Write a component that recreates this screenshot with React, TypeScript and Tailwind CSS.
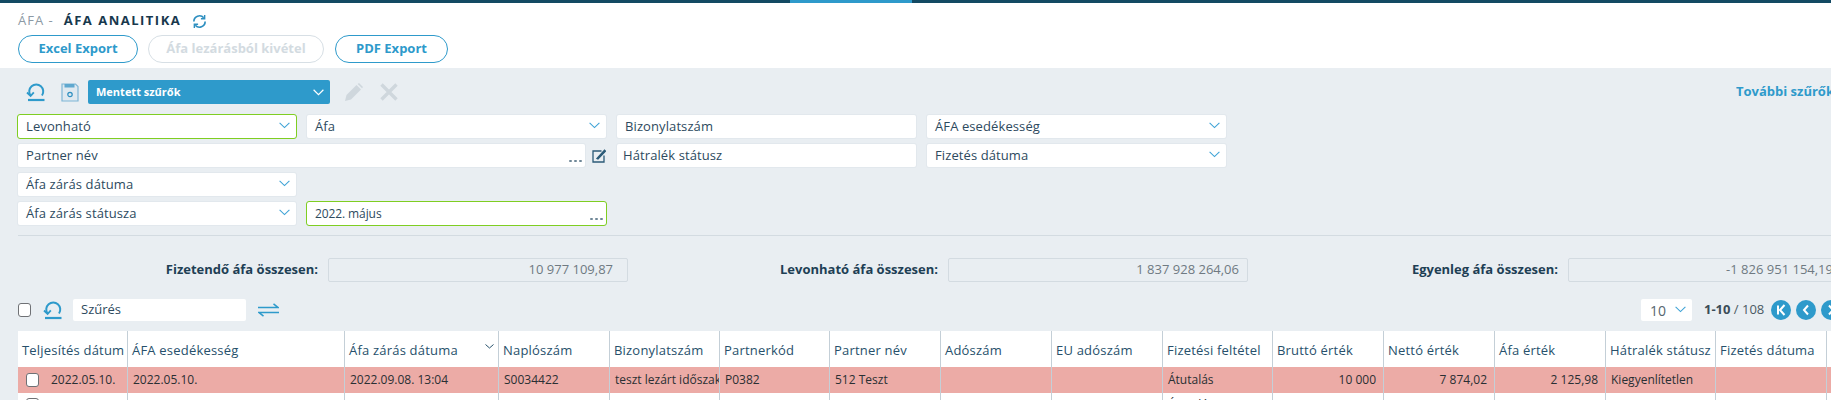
import React from "react";

const font = { fontFamily: '"Open Sans", "Noto Sans", sans-serif' };

function Chevron({ className = "" }: { className?: string }) {
  return (
    <svg width="11" height="7" viewBox="0 0 11 7" className={className} fill="none" stroke="#3fa3d6" strokeWidth="1.1">
      <path d="M0.6 0.8 L5.5 5.6 L10.4 0.8" />
    </svg>
  );
}

function Undo({ size = 20 }: { size?: number }) {
  return (
    <svg width={size} height={size} viewBox="0 0 20 20" fill="none" stroke="#2e9acb" strokeWidth="2">
      <path d="M4.5 13.5 A7 7 0 1 1 16 13.5" />
      <path d="M1 10.5 L4.6 14 L7.8 10.3" strokeWidth="1.8" />
      <path d="M2 18 H18.5" strokeWidth="2.2" />
    </svg>
  );
}

function Save() {
  return (
    <svg width="18" height="19" viewBox="0 0 18 19" fill="none" stroke="#2e8fc0" strokeWidth="1.2">
      <path d="M1 1 H14.5 L17 3.5 V18 H1 Z" fill="#dfe9f0" stroke="#7fb6d6" />
      <rect x="3.5" y="1" width="10" height="3.5" fill="#5fa8cf" stroke="none" />
      <circle cx="9" cy="11.5" r="2.2" />
    </svg>
  );
}

function Field({ children, green = false, chevron = false, dots = false, tone = "" }: { children: React.ReactNode; green?: boolean; chevron?: boolean; dots?: boolean; tone?: string }) {
  return (
    <div
      className={`relative flex h-[23px] items-center rounded-[2px] bg-white text-[13px] text-[#2d4a5e] ${tone || "pl-2"} ${
        green ? "outline outline-1 outline-[#7fce22]" : "shadow-[0_0_0_1px_#e2e8ed]"
      }`}
    >
      <span className="tracking-[0.1px]">{children}</span>
      {chevron && (
        <span className="absolute right-[6px] top-[7px]">
          <Chevron />
        </span>
      )}
      {dots && <Dots />}
    </div>
  );
}

function Dots() {
  return (
    <span className="absolute bottom-[5px] right-[3px] flex gap-[2px]">
      <i className="block h-[2px] w-[3px] rounded-full bg-[#6f8797]" />
      <i className="block h-[2px] w-[3px] rounded-full bg-[#6f8797]" />
      <i className="block h-[2px] w-[3px] rounded-full bg-[#6f8797]" />
    </span>
  );
}

function Sum({ label, value, pad }: { label: string; value: string; pad: string }) {
  return (
    <div className="flex w-[620px] shrink-0 items-center justify-end gap-[10px]">
      <span className="text-[13px] font-bold text-[#1e3f55]">{label}</span>
      <div className={`flex h-[24px] w-[300px] items-center justify-end rounded-[2px] border border-[#d3dbe1] bg-[#e9eef2] text-[13px] text-[#6f7a82] ${pad}`}>
        {value}
      </div>
    </div>
  );
}

function PageBtn({ d }: { d: string }) {
  return (
    <span className="flex h-5 w-5 shrink-0 items-center justify-center rounded-full bg-[#2e9acb]">
      <svg width="12" height="12" viewBox="0 0 12 12" fill="none" stroke="#fff" strokeWidth="2">
        <path d={d} />
      </svg>
    </span>
  );
}

const columns: { title: string; w: number; cell?: string; right?: boolean }[] = [
  { title: "Teljesítés dátum", w: 110 },
  { title: "ÁFA esedékesség", w: 217, cell: "2022.05.10." },
  { title: "Áfa zárás dátuma", w: 154, cell: "2022.09.08. 13:04" },
  { title: "Naplószám", w: 111, cell: "S0034422" },
  { title: "Bizonylatszám", w: 110, cell: "teszt lezárt időszak" },
  { title: "Partnerkód", w: 110, cell: "P0382" },
  { title: "Partner név", w: 111, cell: "512 Teszt" },
  { title: "Adószám", w: 111 },
  { title: "EU adószám", w: 111 },
  { title: "Fizetési feltétel", w: 110, cell: "Átutalás" },
  { title: "Bruttó érték", w: 111, cell: "10 000", right: true },
  { title: "Nettó érték", w: 111, cell: "7 874,02", right: true },
  { title: "Áfa érték", w: 111, cell: "2 125,98", right: true },
  { title: "Hátralék státusz", w: 110, cell: "Kiegyenlítetlen" },
  { title: "Fizetés dátuma", w: 111 },
  { title: "", w: 60 },
];

export default function App() {
  return (
    <div className="h-[400px] w-[1831px] overflow-hidden bg-[#e9eef2]" style={font}>
      <div className="flex h-[3px]">
        <div className="w-[790px] bg-[#134a63]" />
        <div className="w-[122px] bg-[#2e9acb]" />
        <div className="flex-1 bg-[#134a63]" />
      </div>

      <header className="h-[65px] bg-white pl-[18px]">
        <div className="flex h-[32px] items-center pt-[4px]">
          <span className="text-[13px] tracking-[1px] text-[#8c99a4]">ÁFA -</span>
          <span className="ml-[10px] text-[13px] font-bold tracking-[1.5px] text-[#17384d]">ÁFA ANALITIKA</span>
          <svg className="ml-[11px]" width="15" height="15" viewBox="0 0 16 16" fill="none" stroke="#2e8fc0" strokeWidth="1.8">
            <path d="M2 8 A6 6 0 0 1 12.5 4" />
            <path d="M14 8 A6 6 0 0 1 3.5 12" />
            <path d="M13.5 1 V5 H9.5" strokeWidth="1.5" />
            <path d="M2.5 15 V11 H6.5" strokeWidth="1.5" />
          </svg>
        </div>
        <div className="flex">
          <button className="h-[28px] w-[120px] rounded-full border border-[#2e9acb] text-[13px] font-bold text-[#2e9acb]">Excel Export</button>
          <button className="ml-[10px] h-[28px] w-[176px] rounded-full border border-[#d7dfe5] text-[13px] font-bold text-[#d3dbe1]">Áfa lezárásból kivétel</button>
          <button className="ml-[11px] h-[28px] w-[113px] rounded-full border border-[#2e9acb] text-[13px] font-bold text-[#2e9acb]">PDF Export</button>
        </div>
      </header>

      <section className="pl-[18px]">
        <div className="flex h-[47px] items-center pt-[1px]">
          <span className="ml-[8px]"><Undo /></span>
          <span className="ml-[15px]"><Save /></span>
          <div className="relative ml-[9px] flex h-[24px] w-[242px] items-center rounded-[2px] bg-[#2e9acb] pl-[8px] text-[11px] font-bold text-white">
            Mentett szűrők
            <svg className="absolute right-[6px] top-[9px]" width="11" height="7" viewBox="0 0 11 7" fill="none" stroke="#fff" strokeWidth="1.2">
              <path d="M0.6 0.8 L5.5 5.6 L10.4 0.8" />
            </svg>
          </div>
          <svg className="ml-[15px]" width="18" height="18" viewBox="0 0 18 18" fill="#cfd7dd">
            <path d="M0 18 L1.5 12 L11.5 2 L16 6.5 L6 16.5 Z" />
            <path d="M12.7 1 L14 0 L18 4 L17 5.3 Z" />
          </svg>
          <svg className="ml-[17px]" width="18" height="18" viewBox="0 0 18 18" fill="none" stroke="#cfd7dd" strokeWidth="3.4">
            <path d="M1.5 1.5 L16.5 16.5 M16.5 1.5 L1.5 16.5" />
          </svg>
          <span className="ml-auto w-[95px] overflow-hidden whitespace-nowrap text-[13px] font-bold text-[#2e9acb]">További szűrők</span>
        </div>

        <div className="grid grid-cols-[278px_299px_299px_299px] gap-x-[11px] gap-y-[6px]">
          <Field green chevron>Levonható</Field>
          <Field chevron>Áfa</Field>
          <Field>Bizonylatszám</Field>
          <Field chevron>ÁFA esedékesség</Field>

          <div className="col-span-2 flex items-center">
            <div className="flex-1"><Field dots>Partner név</Field></div>
            <svg className="ml-[7px]" width="14" height="14" viewBox="0 0 14 14" fill="none" stroke="#2c5b78" strokeWidth="1.3">
              <path d="M9.5 2 H1 V13 H12 V6.5" />
              <path d="M5 9.5 L12.5 1.2 L13.5 2.2 L6 10 Z" fill="#2c5b78" />
            </svg>
          </div>
          <Field tone="pl-[6px]">Hátralék státusz</Field>
          <Field chevron>Fizetés dátuma</Field>

          <Field chevron>Áfa zárás dátuma</Field>
          <div className="col-span-3" />

          <Field chevron>Áfa zárás státusza</Field>
          <Field green dots><span className="text-[12px] tracking-[-0.1px]">2022. május</span></Field>
        </div>

        <div className="mt-[10px] h-px bg-[#d3dbe1]" />
      </section>

      <section className="mt-[22px] flex w-[1880px] pl-[8px]">
        <Sum label="Fizetendő áfa összesen:" value="10 977 109,87" pad="pr-[14px]" />
        <Sum label="Levonható áfa összesen:" value="1 837 928 264,06" pad="pr-[8px]" />
        <Sum label="Egyenleg áfa összesen:" value="-1 826 951 154,19" pad="pr-[34px]" />
      </section>

      <section className="mt-[17px] flex h-[22px] w-[1900px] items-center pl-[18px]">
        <span className="h-[14px] w-[13px] shrink-0 rounded-[3px] border border-[#6f7175] bg-white" />
        <span className="ml-[12px] shrink-0"><Undo size={20} /></span>
        <div className="ml-[10px] flex h-[22px] w-[173px] shrink-0 items-center rounded-[2px] bg-white pl-2 text-[13px] text-[#2d4a5e]">Szűrés</div>
        <svg className="ml-[12px] shrink-0" width="21" height="14" viewBox="0 0 21 14" fill="none" stroke="#2e9acb" strokeWidth="1.5">
          <path d="M0 4.5 H20 L15.5 0.8" />
          <path d="M21 9.5 H1 L5.5 13.2" />
        </svg>
        <div className="relative ml-[1362px] flex h-[22px] w-[51px] shrink-0 items-center rounded-[2px] bg-white pl-[9px] text-[14px] text-[#56666f]">
          10
          <span className="absolute right-[6px] top-[7px]"><Chevron /></span>
        </div>
        <span className="ml-[12px] w-[60px] shrink-0 whitespace-nowrap text-[13px] text-[#4b5a64]"><b className="text-[#3b4c57]">1-10</b> / 108</span>
        <span className="ml-[7px] flex shrink-0 gap-[5px]">
          <PageBtn d="M3 1.5 V10.5 M9.5 1 L5 6 L9.5 11" />
          <PageBtn d="M8 1.5 L4 6 L8 10.5" />
          <PageBtn d="M4 1.5 L8 6 L4 10.5" />
        </span>
      </section>

      <section className="ml-[18px] mt-[10px] w-[1900px] bg-white">
        <div className="flex h-[36px] text-[13px] tracking-[0.2px] text-[#27506b]">
          {columns.map((c) => (
            <div key={c.title} style={{ width: c.w }} className="relative flex shrink-0 items-center overflow-hidden whitespace-nowrap border-r border-[#c4cfd7] pl-[4px] pt-[3px]">
              {c.title}
              {c.title === "Áfa zárás dátuma" && (
                <svg className="absolute right-[4px] top-[13px]" width="9" height="5" viewBox="0 0 9 5" fill="none" stroke="#27506b" strokeWidth="1">
                  <path d="M0.5 0.5 L4.5 4 L8.5 0.5" />
                </svg>
              )}
            </div>
          ))}
        </div>
        <div className="flex h-[26px] bg-[#ecaba6] text-[12px] text-[#2a2f33]">
          {columns.map((c, i) => (
            <div
              key={c.title}
              style={{ width: c.w }}
              className={`flex shrink-0 items-center overflow-hidden whitespace-nowrap border-r border-[#c4cfd7] ${c.right ? "justify-end pr-[7px]" : "pl-[5px]"}`}
            >
              {i === 0 ? (
                <>
                  <span className="ml-[3px] h-[14px] w-[13px] shrink-0 rounded-[3px] border border-[#6f7175] bg-white" />
                  <span className="ml-[12px]">2022.05.10.</span>
                </>
              ) : (
                c.cell
              )}
            </div>
          ))}
        </div>
        <div className="flex h-[10px] text-[12px] text-[#2a2f33]">
          {columns.map((c, i) => (
            <div key={c.title} style={{ width: c.w }} className="shrink-0 overflow-hidden border-r border-[#c4cfd7] pl-[8px] pt-[5px]">
              {i === 0 && <span className="block h-[14px] w-[13px] rounded-[3px] border border-[#6f7175] bg-white" />}
              {c.title === "Fizetési feltétel" && <span className="-ml-[3px] block leading-[14px]">Átutalás</span>}
            </div>
          ))}
        </div>
      </section>
    </div>
  );
}
